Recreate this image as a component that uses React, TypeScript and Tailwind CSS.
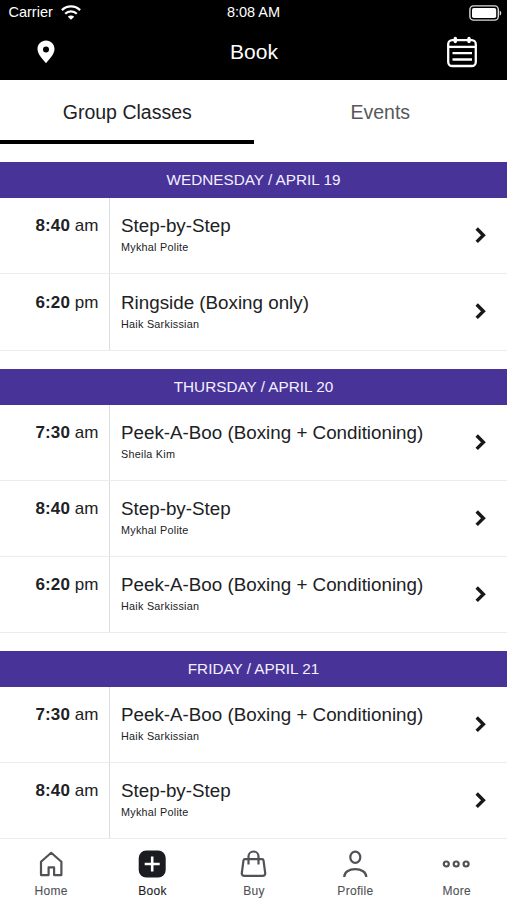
import type { ReactNode } from "react";

interface ClassItem {
  time: string;
  period: string;
  name: string;
  coach: string;
}

interface Day {
  label: string;
  classes: ClassItem[];
}

const days: Day[] = [
  {
    label: "WEDNESDAY / APRIL 19",
    classes: [
      { time: "8:40", period: "am", name: "Step-by-Step", coach: "Mykhal Polite" },
      { time: "6:20", period: "pm", name: "Ringside (Boxing only)", coach: "Haik Sarkissian" },
    ],
  },
  {
    label: "THURSDAY / APRIL 20",
    classes: [
      { time: "7:30", period: "am", name: "Peek-A-Boo (Boxing + Conditioning)", coach: "Sheila Kim" },
      { time: "8:40", period: "am", name: "Step-by-Step", coach: "Mykhal Polite" },
      { time: "6:20", period: "pm", name: "Peek-A-Boo (Boxing + Conditioning)", coach: "Haik Sarkissian" },
    ],
  },
  {
    label: "FRIDAY / APRIL 21",
    classes: [
      { time: "7:30", period: "am", name: "Peek-A-Boo (Boxing + Conditioning)", coach: "Haik Sarkissian" },
      { time: "8:40", period: "am", name: "Step-by-Step", coach: "Mykhal Polite" },
    ],
  },
];

function StatusBar() {
  return (
    <div className="grid h-[24px] grid-cols-3 items-center text-[14.5px] leading-none">
      <div className="flex items-center gap-[8px] pl-[8.5px] pt-px">
        <span>Carrier</span>
        <svg width="20" height="15" viewBox="0 0 20 15" fill="none" stroke="white" strokeWidth="2.3">
          <path d="M.9 5.1a13 13 0 0 1 18.2 0" />
          <path d="M4.2 8.7a8.3 8.3 0 0 1 11.6 0" />
          <path d="M10 14.8 6.8 11.8a4.5 4.5 0 0 1 6.4 0Z" fill="white" stroke="none" />
        </svg>
      </div>
      <span className="text-center">8:08 AM</span>
      <div className="flex justify-end pr-[5px] pt-[2px]">
        <svg width="33" height="16" viewBox="0 0 33 16" fill="none">
          <rect x=".9" y=".9" width="28.4" height="14.2" rx="3.6" stroke="#ddd" strokeWidth="1.4" />
          <rect x="3" y="3" width="24.2" height="10" rx="1.8" fill="white" />
          <path d="M30.7 5.4c2 .7 2 4.5 0 5.2Z" fill="#ddd" />
        </svg>
      </div>
    </div>
  );
}

function TitleBar() {
  return (
    <div className="flex h-[56px] items-start justify-between pl-[37px] pr-[29px]">
      <svg className="mt-[16px]" width="18" height="24" viewBox="0 0 18 24">
        <path
          d="M9 .5C4.2.5.5 4.2.5 8.9c0 5.6 5.6 10.2 8.5 14.4 2.9-4.2 8.5-8.8 8.5-14.4C17.5 4.2 13.8.5 9 .5Z"
          fill="white"
        />
        <circle cx="9" cy="9.6" r="3" fill="black" />
      </svg>
      <h1 className="mt-[15px] pl-[7px] text-[21px] leading-[26px]">Book</h1>
      <svg className="mt-[12px]" width="32" height="32" viewBox="0 0 32 32" fill="none" stroke="white" strokeWidth="2.3">
        <rect x="2.2" y="4.2" width="27.6" height="25.8" rx="4" />
        <path d="M2 10.9h28" />
        <path d="M9.3 2.5v3M23 2.5v3" strokeWidth="3.4" strokeLinecap="round" />
        <path d="M6.5 17.2H26M6.5 23.5H26" />
      </svg>
    </div>
  );
}

function ClassRow({ item }: { item: ClassItem }) {
  return (
    <li className="flex h-[76.2px] border-b border-[#ebecee]">
      <div className="w-[110px] shrink-0 border-r border-[#dcdde1] pr-[10.4px] pt-[17.2px] text-right text-[17px] leading-[22px] tracking-[0.1px]">
        <b>{item.time}</b> {item.period}
      </div>
      <div className="flex-1 pl-[11px] pt-[16.2px]">
        <p className="text-[18.8px] leading-[24px]">{item.name}</p>
        <p className="mt-[3px] text-[10.8px] leading-[13px] tracking-[0.26px]">{item.coach}</p>
      </div>
      <svg className="mr-[19px] mt-[28px]" width="14" height="19" viewBox="0 0 14 19" fill="none" stroke="#17181a" strokeWidth="3.4">
        <path d="m2.7 2.5 6.7 6.7-6.700 6.700" />
      </svg>
    </li>
  );
}

function NavItem({ label, active, children }: { label: string; active?: boolean; children: ReactNode }) {
  return (
    <a className={`flex flex-col items-center ${active ? "text-[#1b1c1f]" : "text-[#505256]"}`}>
      <svg width="30" height="30" viewBox="0 0 30 30" fill="none" stroke="currentColor" strokeWidth="2.2">
        {children}
      </svg>
      <span className="mt-[5px] pl-px text-[12px] leading-[14px] tracking-[0.3px] [-webkit-text-stroke:0.1px]">{label}</span>
    </a>
  );
}

export default function App() {
  return (
    <div className="flex h-[900px] w-[507px] flex-col overflow-hidden bg-white font-['Liberation_Sans',Arial,sans-serif] text-[#202124]">
      <header className="h-[80px] shrink-0 bg-black text-white">
        <StatusBar />
        <TitleBar />
      </header>

      <div className="grid h-[64px] shrink-0 grid-cols-2 text-center text-[19.5px] leading-[60px]">
        <div className="h-[64px] border-b-[4px] border-black pl-px pt-[2px]">Group Classes</div>
        <div className="pt-[2px] text-[#56585c]">Events</div>
      </div>

      <main className="flex h-[695.4px] shrink-0 flex-col gap-[18.2px] pt-[18.4px]">
        {days.map((day) => (
          <section key={day.label}>
            <h2 className="h-[35.8px] bg-[#483499] text-center text-[15.3px] leading-[36px] text-[#f3f0ff]">
              {day.label}
            </h2>
            <ul>
              {day.classes.map((item) => (
                <ClassRow key={item.time + item.period} item={item} />
              ))}
            </ul>
          </section>
        ))}
      </main>

      <nav className="grid flex-1 grid-cols-5 pt-[9.6px]">
        <NavItem label="Home">
          <path d="M5 12.8 15.2 3.8l10.2 9v13.3h-7.3v-7.7h-5.5v7.7H5Z" strokeLinejoin="round" />
        </NavItem>
        <NavItem label="Book" active>
          <rect x="1.7" y="1.5" width="27" height="27" rx="7.5" fill="currentColor" stroke="none" />
          <path d="M15.2 7.5v15M7.700 15h15" stroke="white" strokeWidth="2.6" />
        </NavItem>
        <NavItem label="Buy">
          <path d="M7 10.2h17c.9 0 1.4.4 1.5 1.2l1.7 12.6c.2 1.6-.8 2.8-2.4 2.8H6.2c-1.6 0-2.6-1.2-2.4-2.8l1.7-12.6c.1-.8.6-1.2 1.5-1.2Z" />
          <path d="M10.5 15.500V7.500a5 5 0 0 1 10 0v8" />
        </NavItem>
        <NavItem label="Profile">
          <ellipse cx="15.3" cy="8.3" rx="5" ry="5.6" />
          <path d="M4.2 28c0-5 4.8-7.8 11-7.8S26.3 23 26.3 28" />
        </NavItem>
        <NavItem label="More">
          <circle cx="5.3" cy="15" r="2.5" />
          <circle cx="15.200" cy="15" r="2.5" />
          <circle cx="25.100" cy="15" r="2.5" />
        </NavItem>
      </nav>
    </div>
  );
}
